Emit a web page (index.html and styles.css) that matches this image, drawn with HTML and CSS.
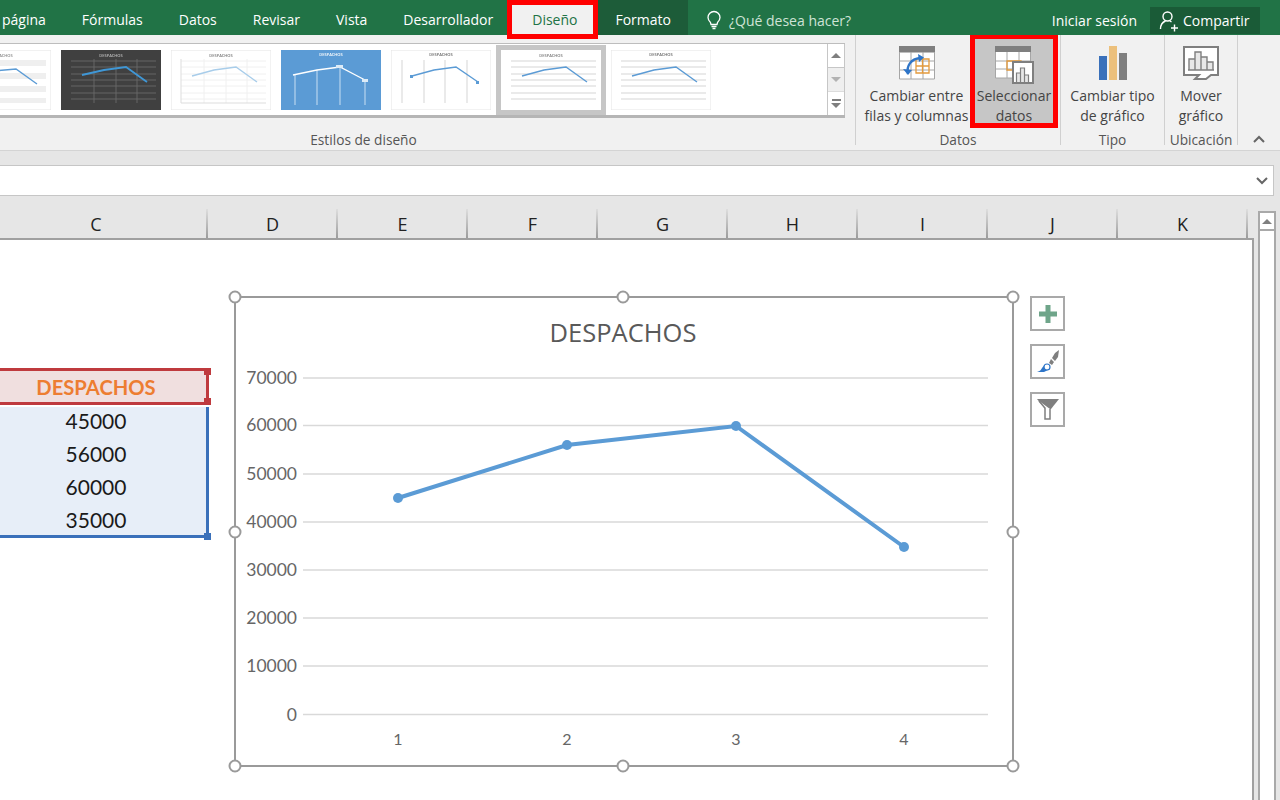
FILE: index.html
```html
<!DOCTYPE html>
<html lang="es">
<head>
    <meta charset="UTF-8">
    <title>Seleccionar datos</title>
    <link rel="stylesheet" href="styles.css">
</head>
<body>
    <!-- pestañas -->
    <div class="tabs">
        <span class="tab first">página</span>
        <span class="tab">Fórmulas</span>
        <span class="tab">Datos</span>
        <span class="tab">Revisar</span>
        <span class="tab">Vista</span>
        <span class="tab">Desarrollador</span>
        <span class="tab active">Diseño</span>
        <span class="tab format">Formato</span>
        <div class="tell-me">
            <svg width="16" height="20" viewBox="0 0 16 20" fill="none" stroke="#fff" stroke-width="1.3"><path d="M4.5 12.5C3 11 2 9.800 2 7.500a6 6 0 0 1 12 0c0 2.300-1 3.500-2.500 5l-.5 2H5z"/><path d="M5.500 16.500h5M6.500 18.500h3"/></svg>
            <span>¿Qué desea hacer?</span>
        </div>
        <span class="login">Iniciar sesión</span>
        <div class="share">
            <svg width="20" height="22" viewBox="0 0 20 22" fill="none" stroke="#fff" stroke-width="1.4"><circle cx="8.500" cy="6.500" r="4.500"/><path d="M1.500 19c0-4 2.500-7 5-8M11 11l1.500 1M12 18h7M15.500 14.500v7"/></svg>
            <span>Compartir</span>
        </div>
    </div>

    <!-- cinta -->
    <div class="ribbon">
        <div class="group styles-group">
            <div class="gallery">
                <div class="thumbs">
                    <svg class="thumb" viewBox="0 0 100 60"><rect width="100" height="60" fill="#fff" stroke="#e4e4e4"/><text x="50" y="7" class="mini" fill="#888">DESPACHOS</text><path d="M10 10h85v6H10zM10 23h85v6H10zM10 36h85v6H10zM10 48h85v5H10z" fill="#efefef"/><path d="M21 26L43 21 65 19 86 34" fill="none" stroke="#5b9bd5" stroke-width="1.400"/></svg>
                    <svg class="thumb" viewBox="0 0 100 60"><rect width="100" height="60" fill="#404040"/><text x="50" y="7" class="mini" fill="#bbb">DESPACHOS</text><path d="M10 11h85M10 17h85M10 24h85M10 30h85M10 36h85M10 43h85M10 49h85M33 9v44M55 9v44M76 9v44" stroke="#6a6a6a" stroke-width=".9"/><path d="M21 25L43 20 65 17 86 32" fill="none" stroke="#3f97d6" stroke-width="1.800"/></svg>
                    <svg class="thumb" viewBox="0 0 100 60"><rect width="100" height="60" fill="#fff" stroke="#e4e4e4"/><text x="50" y="7" class="mini" fill="#777">DESPACHOS</text><path d="M10 11h85M10 17h85M10 24h85M10 30h85M10 36h85M10 43h85M10 49h85M33 9v44M55 9v44M76 9v44" stroke="#f0f0f0"/><path d="M10 9v44h85" fill="none" stroke="#ddd"/><path d="M21 26L43 20 65 17 86 32" fill="none" stroke="#a8cdea" stroke-width="1.400"/></svg>
                    <svg class="thumb" viewBox="0 0 100 60"><rect width="100" height="60" fill="#5b9bd5"/><text x="50" y="6" class="mini" fill="#fff">DESPACHOS</text><path d="M14 25v30M36 20v35M59 17v38M84 30v25" stroke="#b6d4ee" stroke-width="1.200"/><path d="M12 25L36 20 59 17 84 30" fill="none" stroke="#fff" stroke-width="1.300"/><path d="M55 15h7v3h-7zM81 29h6v3h-6z" fill="#dcebf7"/></svg>
                    <svg class="thumb" viewBox="0 0 100 60"><rect width="100" height="60" fill="#fff" stroke="#e4e4e4"/><text x="50" y="6" class="mini" fill="#666">DESPACHOS</text><path d="M11 10v43M33 10v43M54 10v43M76 10v43" stroke="#dcdcdc" stroke-width="1.200"/><path d="M21 26L43 20 65 17 87 32" fill="none" stroke="#5b9bd5" stroke-width="1.400"/><rect x="85" y="31" width="3" height="3" fill="#5b9bd5"/><rect x="19" y="25" width="3" height="3" fill="#5b9bd5"/></svg>
                    <div class="thumb-selected">
                        <svg class="thumb" viewBox="0 0 100 60"><rect width="100" height="60" fill="#fff"/><text x="50" y="7" class="mini" fill="#777">DESPACHOS</text><path d="M10 11h85M10 17h85M10 24h85M10 30h85M10 36h85M10 43h85M10 49h85" stroke="#e4e4e4" stroke-width="1.500"/><path d="M21 26L43 20 65 17 86 32" fill="none" stroke="#5b9bd5" stroke-width="1.400"/></svg>
                    </div>
                    <svg class="thumb" viewBox="0 0 100 60"><rect width="100" height="60" fill="#fff" stroke="#e4e4e4"/><text x="50" y="6" class="mini" fill="#666">DESPACHOS</text><path d="M10 11h85M10 17h85M10 24h85M10 30h85M10 36h85M10 43h85M10 49h85" stroke="#e4e4e4" stroke-width="1.500"/><path d="M21 26L43 20 65 17 86 32" fill="none" stroke="#5b9bd5" stroke-width="1.400"/></svg>
                </div>
                <div class="scroller">
                    <div class="scroll-btn"><span class="tri up"></span></div>
                    <div class="scroll-btn off"><span class="tri down"></span></div>
                    <div class="scroll-btn more"><span class="tri down"></span></div>
                </div>
            </div>
            <div class="group-label styles-label">Estilos de diseño</div>
        </div>

        <div class="group datos-group">
            <div class="group-buttons">
                <div class="rb swap">
                    <svg width="36" height="34" viewBox="0 0 36 34"><rect width="36" height="33" fill="#fff"/><rect width="36" height="6.500" fill="#7f7f7f"/><path d="M.5 6v27h35V6M12 6v27M24 6v27M0 15h36M0 24h36" fill="none" stroke="#a6a6a6"/><path d="M17 13h13v14H17zM23.500 13v14M17 20h13" fill="none" stroke="#e49a3c" stroke-width="1.300"/><path d="M9 28c-2-8 3-15 12-16" fill="none" stroke="#2e75c8" stroke-width="2.400"/><path d="M19 8l6 3.500-5 4.500zM4 23l5 6 4-5z" fill="#2e75c8"/></svg>
                    <span>Cambiar entre<br>filas y columnas</span>
                </div>
                <div class="rb select">
                    <svg width="40" height="38" viewBox="0 0 40 38"><rect width="36" height="32" fill="#fff"/><rect width="36" height="6" fill="#7f7f7f"/><path d="M.5 6v26h35V6M12 6v26M24 6v26M0 15h36M0 23h36" fill="none" stroke="#a6a6a6"/><path d="M12 15h14v9H12z" fill="none" stroke="#e49a3c" stroke-width="1.300"/><rect x="17" y="15" width="22" height="23" fill="#7f7f7f"/><rect x="19" y="17" width="18" height="19" fill="#fff"/><path d="M21.500 36V27h4v9M25.500 36V22h4v14M29.500 36V29h4v7" fill="#e7e7e7" stroke="#7f7f7f" stroke-width="1.200"/></svg>
                    <span>Seleccionar<br>datos</span>
                </div>
            </div>
            <div class="group-label">Datos</div>
        </div>

        <div class="group tipo-group">
            <div class="rb">
                <svg width="28" height="34" viewBox="0 0 28 34"><rect y="10" width="8" height="24" fill="#3a70ba"/><rect x="10" width="8" height="34" fill="#ecc07c"/><rect x="20" y="7" width="8" height="27" fill="#7f7f7f"/></svg>
                <span>Cambiar tipo<br>de gráfico</span>
            </div>
            <div class="group-label">Tipo</div>
        </div>

        <div class="group ubic-group">
            <div class="rb">
                <svg width="36" height="34" viewBox="0 0 36 34"><path d="M16 29H1V1h34v28h-7l-5 4H12l4-4z" fill="#fff" stroke="#7f7f7f" stroke-width="2"/><path d="M6 24V13h6v11M12 24V6h6v18M18 24V11h6v13M24 24V16h6v8M5 24h26" fill="#e8e8e8" stroke="#7f7f7f" stroke-width="1.400"/></svg>
                <span>Mover<br>gráfico</span>
            </div>
            <div class="group-label">Ubicación</div>
        </div>

        <div class="collapse">
            <svg width="12" height="8" viewBox="0 0 12 8" fill="none" stroke="#666" stroke-width="2"><path d="M1 7l5-5 5 5"/></svg>
        </div>
    </div>

    <!-- barra de fórmulas -->
    <div class="formula-area">
        <div class="formula-input">
            <svg width="12" height="8" viewBox="0 0 12 8" fill="none" stroke="#666" stroke-width="2"><path d="M1 1l5 5 5-5"/></svg>
        </div>
    </div>

    <div class="workspace">
        <div class="pane">
            <div class="col-heads">
                <div class="col first-col">C</div>
                <div class="col">D</div>
                <div class="col">E</div>
                <div class="col">F</div>
                <div class="col">G</div>
                <div class="col">H</div>
                <div class="col">I</div>
                <div class="col">J</div>
                <div class="col">K</div>
            </div>

            <div class="sheet">
                <div class="data-range">
                    <div class="range-head">
                        DESPACHOS
                        <i class="handle red h-top"></i>
                        <i class="handle red h-bottom"></i>
                    </div>
                    <div class="range-body">
                        <div>45000</div>
                        <div>56000</div>
                        <div>60000</div>
                        <div>35000</div>
                        <i class="handle blue h-corner"></i>
                    </div>
                </div>

                <svg class="chart" width="792" height="484" viewBox="228 290 792 484">
                    <rect x="235" y="297" width="778" height="469" fill="#fff" stroke="#9a9a9a" stroke-width="2"/>
                    <text x="623" y="342" class="chart-title">DESPACHOS</text>
                    <path d="M303 378h685M303 425.500h685M303 474h685M303 522h685M303 570h685M303 618h685M303 666h685M303 714.500h685" stroke="#d9d9d9" stroke-width="1.500"/>
                    <g class="y-labels">
                        <text x="297" y="384">70000</text>
                        <text x="297" y="431">60000</text>
                        <text x="297" y="480">50000</text>
                        <text x="297" y="528">40000</text>
                        <text x="297" y="576">30000</text>
                        <text x="297" y="624">20000</text>
                        <text x="297" y="672">10000</text>
                        <text x="297" y="721">0</text>
                    </g>
                    <g class="x-labels">
                        <text x="398" y="745">1</text>
                        <text x="567" y="745">2</text>
                        <text x="736" y="745">3</text>
                        <text x="904" y="745">4</text>
                    </g>
                    <polyline points="398,498 567,445 736,426 904,547" fill="none" stroke="#5b9bd5" stroke-width="4"/>
                    <g fill="#5b9bd5">
                        <circle cx="398" cy="498" r="5"/>
                        <circle cx="567" cy="445" r="5"/>
                        <circle cx="736" cy="426" r="5"/>
                        <circle cx="904" cy="547" r="5"/>
                    </g>
                    <g fill="#fff" stroke="#9a9a9a" stroke-width="2">
                        <circle cx="235" cy="297" r="5.500"/>
                        <circle cx="623" cy="297" r="5.500"/>
                        <circle cx="1013" cy="297" r="5.500"/>
                        <circle cx="235" cy="532" r="5.500"/>
                        <circle cx="1013" cy="532" r="5.500"/>
                        <circle cx="235" cy="766" r="5.500"/>
                        <circle cx="623" cy="766" r="5.500"/>
                        <circle cx="1013" cy="766" r="5.500"/>
                    </g>
                </svg>

                <div class="chart-tools">
                    <div class="tool">
                        <svg width="18" height="18" viewBox="0 0 18 18"><path d="M6.500 0h5v6.500H18v5h-6.500V18h-5v-6.500H0v-5h6.500z" fill="#6fa58a"/></svg>
                    </div>
                    <div class="tool">
                        <svg width="24" height="24" viewBox="0 0 24 24"><path d="M23 0l-1 7-3 4-3-3 3-5zM15 9l3 3-2 3-3-2z" fill="#7f7f7f"/><path d="M1 22c3-1 4-2 5-4s3-3 5-3l3 2-2 3-4 2z" fill="#2e75c8"/><circle cx="11" cy="17" r="3" fill="#fff" stroke="#2e75c8" stroke-width="1.200"/></svg>
                    </div>
                    <div class="tool">
                        <svg width="24" height="22" viewBox="0 0 24 22"><path d="M1 0h22l-8 10H9z" fill="#7f7f7f"/><path d="M3 2l6 7v11h5V10" fill="#fff" stroke="#7f7f7f" stroke-width="1.500"/></svg>
                    </div>
                </div>
            </div>
        </div>

        <div class="vscroll">
            <div class="vscroll-up"><span class="tri up"></span></div>
        </div>
    </div>
</body>
</html>
```

FILE: styles.css
```css
* {
    box-sizing: border-box;
}
html, body {
    margin: 0;
    height: 800px;
    overflow: hidden;
}
body {
    font-family: "Open Sans", "Noto Sans", sans-serif;
    font-size: 14px;
    color: #444;
    background-color: #e6e6e6;
}

/* tabs */
.tabs {
    display: flex;
    align-items: center;
    height: 35px;
    background-color: #217346;
    color: #fff;
    position: relative;
    z-index: 2;
}
.tab {
    padding: 0 18px;
    height: 35px;
    line-height: 40px;
    white-space: nowrap;
}
.tab.first {
    margin-left: -16px;
}
.tab.active {
    height: 39px;
    align-self: flex-start;
    margin-left: -4px;
    padding: 0 16px 0 20px;
    line-height: 30px;
    border: 5px solid #f00;
    background-color: #f1f1f1;
    color: #217346;
}
.tab.format {
    padding: 0 17px;
    background-color: #1d5c39;
}
.tell-me {
    display: flex;
    align-items: center;
    gap: 7px;
    margin-left: 18px;
    margin-top: 5px;
    color: #cfe3d7;
}
.login {
    margin-left: auto;
    margin-top: 5px;
}
.share {
    display: flex;
    align-items: center;
    gap: 4px;
    width: 110px;
    height: 27px;
    margin: 6px 20px 0 13px;
    padding-left: 9px;
    background-color: #1a5b37;
}

/* ribbon */
.ribbon {
    display: flex;
    height: 116px;
    background-color: #f1f1f1;
    border-bottom: 1px solid #d4d4d4;
}
.group {
    display: flex;
    flex-direction: column;
    border-right: 1px solid #d0d0d0;
    height: 110px;
}
.group-label {
    margin-top: auto;
    margin-bottom: -4px;
    text-align: center;
    font-size: 13.7px;
    line-height: 18px;
    color: #555;
}
.styles-group {
    width: 856px;
}
.styles-label {
    padding-right: 128px;
}
.gallery {
    display: flex;
    height: 75px;
    margin-top: 8px;
    margin-right: 10px;
    background-color: #fff;
    border-top: 1px solid #bdbdbd;
    border-bottom: 3px solid #b5b5b5;
    overflow: hidden;
}
.thumbs {
    flex: 1;
    display: flex;
    align-items: center;
    gap: 10px;
    margin-left: -49px;
    min-width: 0;
}
.thumb {
    display: block;
    flex: none;
    width: 100px;
    height: 60px;
    filter: blur(.3px);
}
.thumb-selected {
    flex: none;
    margin: 0 -5px;
    padding: 5px;
    background-color: #c6c6c6;
}
.mini {
    font-size: 4px;
    font-weight: 600;
    text-anchor: middle;
}
.scroller {
    flex: none;
    width: 18px;
    display: flex;
    flex-direction: column;
    border-left: 1px solid #c6c6c6;
    border-right: 1px solid #c6c6c6;
}
.scroll-btn {
    flex: 1;
    display: flex;
    flex-direction: column;
    align-items: center;
    justify-content: center;
    border-bottom: 1px solid #c6c6c6;
}
.scroll-btn:last-child {
    border-bottom: none;
}
.scroll-btn.off {
    background-color: #e6e6e6;
    opacity: .6;
}
.scroll-btn.more::before {
    content: "";
    width: 9px;
    height: 2px;
    margin-bottom: 2px;
    background-color: #7f7f7f;
}
.tri {
    width: 0;
    height: 0;
    border-left: 5px solid transparent;
    border-right: 5px solid transparent;
}
.tri.up {
    border-bottom: 5px solid #7f7f7f;
}
.tri.down {
    border-top: 5px solid #7f7f7f;
}
.group-buttons {
    display: flex;
}
.datos-group {
    width: 205px;
}
.tipo-group {
    width: 104px;
}
.ubic-group {
    width: 73px;
}
.rb {
    display: flex;
    flex-direction: column;
    align-items: center;
    padding-top: 11px;
    height: 93px;
    text-align: center;
    line-height: 20px;
    white-space: nowrap;
}
.rb svg {
    flex: none;
    height: 34px;
}
.rb span {
    margin-top: 6px;
}
.swap {
    width: 114px;
    padding-left: 7px;
}
.select {
    width: 88px;
    padding-top: 7px;
    border: 5px solid #f00;
    border-top-width: 4px;
    background-color: #c6c6c6;
}
.select svg {
    height: 38px;
    margin-left: 2px;
}
.select span {
    margin-top: 2px;
}
.collapse {
    flex: 1;
    display: flex;
    justify-content: center;
    align-items: flex-end;
    height: 109px;
    padding-bottom: 1px;
}

/* formula bar */
.formula-area {
    height: 45px;
    padding-top: 14px;
    padding-right: 6px;
}
.formula-input {
    display: flex;
    align-items: center;
    justify-content: flex-end;
    height: 31px;
    padding-right: 5px;
    background-color: #fff;
    border: 1px solid #c6c6c6;
    border-left: none;
}

/* grid */
.workspace {
    display: flex;
    height: 604px;
}
.pane {
    width: 1254px;
    display: flex;
    flex-direction: column;
}
.col-heads {
    display: flex;
    flex: none;
    height: 44px;
    padding-top: 13px;
    border-bottom: 2px solid #a0a0a0;
    font-size: 18px;
    color: #222;
}
.col {
    width: 130px;
    padding-left: 1px;
    text-align: center;
    line-height: 30px;
    border-right: 2px solid;
    border-image: linear-gradient(#e0e0e0, #9a9a9a) 1;
}
.first-col {
    width: 208px;
    padding-left: 0;
    padding-right: 14px;
}
.sheet {
    flex: 1;
    display: flex;
    align-items: flex-start;
    background-color: #fff;
    border-right: 2px solid #a0a0a0;
}
.data-range {
    flex: none;
    width: 210px;
    margin-top: 128px;
    font-family: Lato, "Open Sans", sans-serif;
    text-align: center;
}
.range-head {
    position: relative;
    width: 209px;
    height: 37px;
    padding-right: 14px;
    background-color: #f0dfdf;
    border-top: 3px solid #bf3a3e;
    border-bottom: 3px solid #bf3a3e;
    border-right: 3px solid #bf3a3e;
    color: #ed7d31;
    font-size: 20.2px;
    font-weight: 700;
    line-height: 33px;
}
.range-body {
    position: relative;
    width: 209px;
    height: 131px;
    margin-top: 2px;
    padding-right: 14px;
    background-color: #e7eef8;
    border-right: 3px solid #3a70ba;
    border-bottom: 3px solid #3a70ba;
    color: #1a1a1a;
    font-size: 21px;
    line-height: 33px;
}
.range-body div {
    position: relative;
    top: -3px;
}
.handle {
    position: absolute;
    width: 7px;
    height: 7px;
}
.handle.red {
    background-color: #bf3a3e;
    right: -5px;
}
.handle.blue {
    background-color: #3a70ba;
}
.h-top {
    top: -3px;
}
.h-bottom {
    bottom: -3px;
}
.h-corner {
    right: -5px;
    bottom: -5px;
}
.chart {
    flex: none;
    display: block;
    margin: 50px 0 0 18px;
    font-family: Lato, "Open Sans", sans-serif;
}
.chart-title {
    font-family: "Open Sans", sans-serif;
    font-size: 25.5px;
    fill: #595959;
    text-anchor: middle;
}
.y-labels text {
    font-size: 17.5px;
    fill: #666;
    text-anchor: end;
}
.x-labels text {
    font-size: 16px;
    fill: #666;
    text-anchor: middle;
}
.chart-tools {
    flex: none;
    display: flex;
    flex-direction: column;
    gap: 13px;
    margin: 56px 0 0 10px;
}
.tool {
    display: flex;
    align-items: center;
    justify-content: center;
    width: 35px;
    height: 35px;
    background-color: #fff;
    border: 2px solid #a9a9a9;
}
.vscroll {
    width: 18px;
    height: 600px;
    margin: 15px 0 0 4px;
    background-color: #fff;
    border: 2px solid #a9a9a9;
    border-bottom: none;
}
.vscroll-up {
    display: flex;
    align-items: center;
    justify-content: center;
    height: 18px;
    border-bottom: 2px solid #a9a9a9;
}
```
